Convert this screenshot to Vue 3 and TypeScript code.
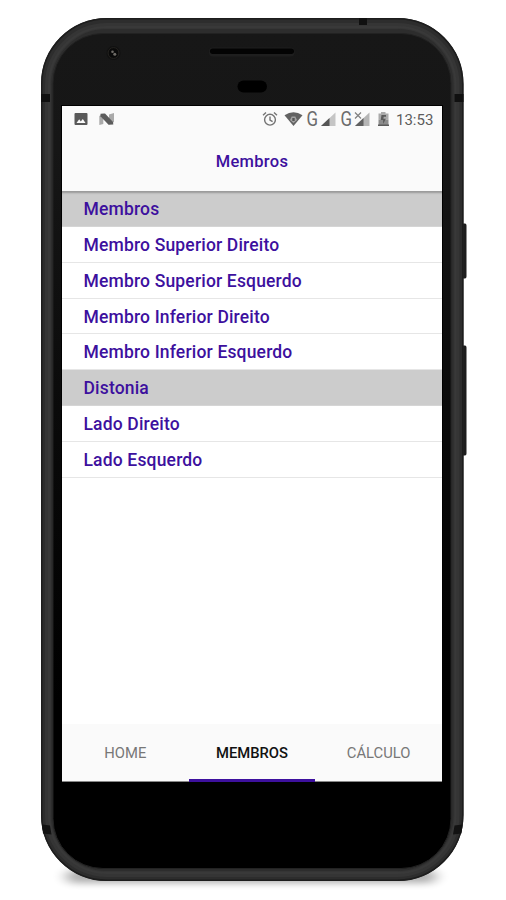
<script setup lang="ts">
interface Row {
  label: string
  header?: boolean
}

interface Tab {
  label: string
  active?: boolean
}

const title = 'Membros'

const rows: Row[] = [
  { label: 'Membros', header: true },
  { label: 'Membro Superior Direito' },
  { label: 'Membro Superior Esquerdo' },
  { label: 'Membro Inferior Direito' },
  { label: 'Membro Inferior Esquerdo' },
  { label: 'Distonia', header: true },
  { label: 'Lado Direito' },
  { label: 'Lado Esquerdo' },
]

const tabs: Tab[] = [
  { label: 'HOME' },
  { label: 'MEMBROS', active: true },
  { label: 'CÁLCULO' },
]
</script>

<template>
  <main class="stage">
    <svg class="device" viewBox="0 0 506 900" aria-hidden="true">
      <defs>
        <linearGradient id="glass" x1="0" y1="0" x2="0" y2="1">
          <stop offset="0" stop-color="#171717" />
          <stop offset="0.14" stop-color="#161616" />
          <stop offset="0.45" stop-color="#0a0a0a" />
          <stop offset="0.8" stop-color="#000" />
          <stop offset="1" stop-color="#000" />
        </linearGradient>
        <filter id="soft" x="-10%" y="-150%" width="120%" height="400%">
          <feGaussianBlur stdDeviation="7 3.5" />
        </filter>
      </defs>
      <rect x="66" y="870" width="370" height="13" rx="7" fill="#000" opacity="0.32" filter="url(#soft)" />
      <path d="M461 223.500h4q1.500 0 1.500 2v51q0 2-1.500 2h-4zM461 345.500h4q1.500 0 1.500 2v106q0 2-1.500 2h-4z" fill="#1d1d1d" />
      <rect x="41" y="18" width="422.500" height="863" rx="66" fill="#2d2d2d" />
      <rect x="41.750" y="18.750" width="421" height="861.500" rx="65.300" fill="none" stroke="#1d1d1d" stroke-width="1.500" />
      <rect x="48" y="26" width="408.500" height="848" rx="59" fill="none" stroke="#353535" stroke-width="6" />
      <rect x="49" y="27" width="406.500" height="846" rx="58" fill="none" stroke="#393939" stroke-width="2" />
      <rect x="53" y="33.500" width="398" height="835" rx="50" fill="url(#glass)" />
      <rect x="53" y="33.500" width="398" height="835" rx="50" fill="none" stroke="#222" stroke-width="1" />
      <path d="M41 94h9v8H41zM454.500 94h9v8h-9zM359 18h8v7h-8z" fill="#101010" />
      <path d="M42 824.500l8 1 1.500 9-8.500-1zM462.500 824.500l-8 1-1.500 9 8.500-1z" fill="#121212" />
      <circle cx="113.500" cy="53" r="7" fill="#111" />
      <circle cx="113.500" cy="53" r="5.400" fill="#090909" stroke="#24221f" />
      <circle cx="112.500" cy="51.700" r="1.300" fill="#6e6b66" />
      <circle cx="114.800" cy="54.200" r="1.500" fill="#6e6b66" />
      <rect x="209" y="47.500" width="85.500" height="9" rx="4" fill="#1e1e1e" />
      <rect x="210" y="48.500" width="84" height="5.500" rx="2.700" fill="#030303" />
      <rect x="237.500" y="80.500" width="29.500" height="12" rx="6" fill="#000" />
      <rect x="61" y="105" width="382" height="678" fill="#000" />
    </svg>

    <section class="screen">
      <header class="status">
        <svg class="status-left" viewBox="0 0 60 24">
          <path d="M13.500 7h11q1 0 1 1v10q0 1-1 1h-11q-1 0-1-1V8q0-1 1-1zM14.500 17h9l-2.700-4-2 2.500-1.600-2.200z" fill="#595959" fill-rule="evenodd" />
          <path d="M37.300 10l4-2.500V18l-4 1zM47 8.500l5-1.500v9l-5 2.500z" fill="#aaa" />
          <path d="M38.500 7.800l4.500-.3 8 8.500.3 2.500-4.800.3-8-8.500z" fill="#5c5c5c" />
        </svg>
        <div class="status-right">
          <svg class="status-icons" viewBox="0 0 132 24">
            <g fill="none" stroke="#737373" stroke-width="1.400">
              <circle cx="9" cy="13.700" r="5.400" />
              <path d="M9 10.500v3.500l2.600 1.700M2 9.300l3-2.700M16 9.300l-3-2.700" />
            </g>
            <path d="M23.500 9.300q9-6.300 18 0L32.500 20z" fill="#626262" />
            <path d="M30.700 10.500h3.600l1.700 3.500-3.500 3-3.500-3z" fill="#a3a3a3" />
            <path d="M31.300 12h2.400v3h-2.400z" fill="#555" />
            <path d="M60 20L74.500 6.500V20z" fill="#c5c5c5" />
            <path d="M60 20l8.500-7.900V20z" fill="#555" />
            <path d="M94 20l14.500-13.500V20z" fill="#b5b5b5" />
            <path d="M94 20l8.500-7.900V20z" fill="#606060" />
            <path d="M94 6.500l6 6M100 6.500l-6 6" stroke="#808080" stroke-width="1.200" />
            <path d="M117.500 7.500h2.500V6h4.500v1.500h3v6h-10z" fill="#aaa" />
            <path d="M117.500 13.500h10V20h-10z" fill="#8c8c8c" />
            <path d="M125 9h-4.500l-.8 5h2.400v4l2.800-5.300h-2.500l.3-1.900h2.300zM117 18.500h11V20h-11z" fill="#5b5b5b" />
            <g class="network">
              <text x="45.500" y="20" textLength="11.500" lengthAdjust="spacingAndGlyphs">G</text>
              <text x="79.500" y="20" textLength="11.500" lengthAdjust="spacingAndGlyphs">G</text>
            </g>
          </svg>
          <time class="clock">13:53</time>
        </div>
      </header>

      <h1 class="title">{{ title }}</h1>

      <ul class="list">
        <li v-for="row in rows" :key="row.label" class="row" :class="{ 'row-header': row.header }">
          {{ row.label }}
        </li>
      </ul>

      <nav class="tabs">
        <button v-for="tab in tabs" :key="tab.label" class="tab" :class="{ active: tab.active }">
          {{ tab.label }}
        </button>
      </nav>
    </section>
  </main>
</template>

<style>
body {
  background: #fff;
}
</style>

<style scoped>
.stage {
  position: relative;
  box-sizing: border-box;
  width: 506px;
  height: 900px;
  padding: 106px 64px 118px 62px;
  overflow: hidden;
  font-family: Roboto, "Liberation Sans", sans-serif;
}

.device {
  position: absolute;
  inset: 0;
  width: 506px;
  height: 900px;
}

.screen {
  position: relative;
  display: flex;
  flex-direction: column;
  height: 676px;
  background: #fff;
}

.status {
  display: flex;
  justify-content: space-between;
  height: 26px;
  background: #fafafa;
}

.status-left {
  width: 60px;
  height: 24px;
}

.status-right {
  display: flex;
  padding-right: 6px;
}

.status-icons {
  width: 132px;
  height: 24px;
}

.network {
  fill: #6c6c6c;
  font-size: 19.500px;
}

.clock {
  width: 40px;
  margin-left: 3px;
  color: #5d5d5d;
  font-size: 15px;
  line-height: 28px;
  white-space: nowrap;
}

.title {
  height: 59px;
  margin: 0;
  background: #fafafa;
  color: #3d109e;
  font-size: 16.500px;
  font-weight: 500;
  line-height: 60px;
  letter-spacing: 0.3px;
  text-align: center;
}

.list {
  flex: 1;
  margin: 0;
  padding: 0;
  list-style: none;
}

.row {
  box-sizing: border-box;
  height: 35.850px;
  padding-left: 21.500px;
  border-bottom: 1px solid #e6e6e6;
  color: #3d109e;
  font-size: 17.500px;
  font-weight: 500;
  line-height: 36px;
  letter-spacing: 0.170px;
}

.row-header {
  border-bottom-color: #d5d5d5;
  background: #ccc;
}

.row-header:first-child {
  box-shadow: inset 0 3px 2px -1px #999;
}

.tabs {
  display: grid;
  grid-template-columns: repeat(3, 1fr);
  height: 58px;
  background: #fafafa;
}

.tab {
  box-sizing: border-box;
  height: 58px;
  padding: 1px 0 0;
  border: 0;
  border-bottom: 1px solid #888;
  background: none;
  color: #777;
  font: 400 14.800px/50px Roboto, "Liberation Sans", sans-serif;
}

.tab.active {
  padding-top: 3px;
  border-bottom: 3px solid #3d109e;
  color: #111;
  font-weight: 500;
}
</style>
